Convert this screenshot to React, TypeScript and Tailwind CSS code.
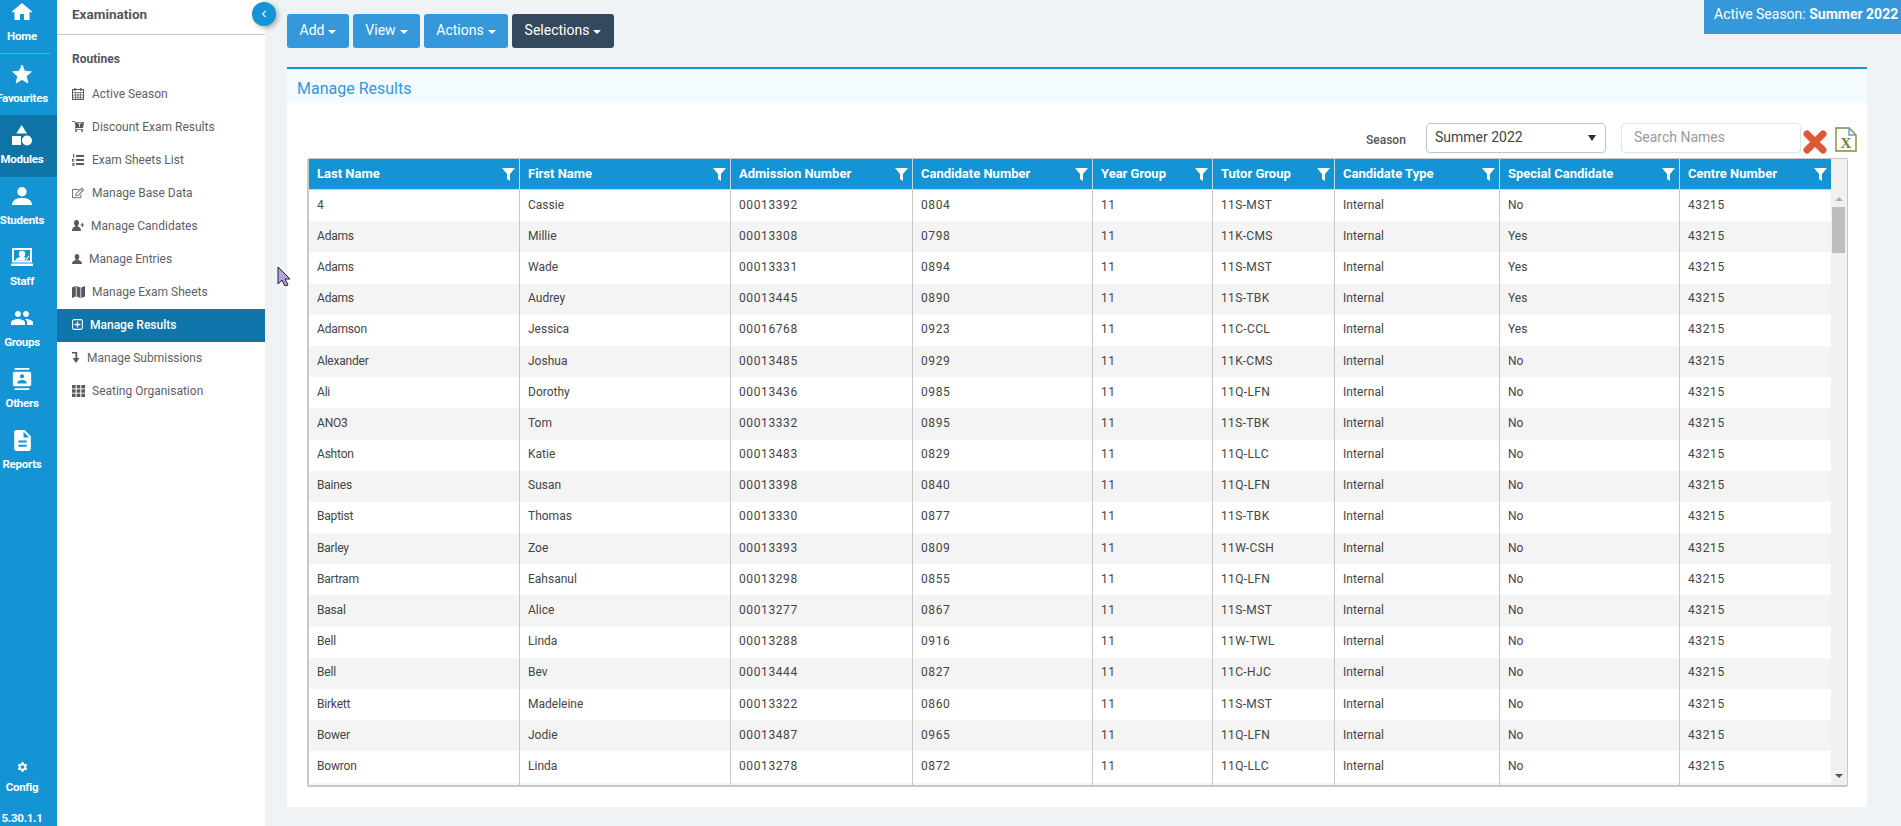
import React from "react";
import { FaRegEdit, FaChevronLeft } from "react-icons/fa";
import { MdPeople, MdContacts, MdDescription, MdSettings } from "react-icons/md";

const rows = [
  ["4","Cassie","00013392","0804","11","11S-MST","Internal","No"],
  ["Adams","Millie","00013308","0798","11","11K-CMS","Internal","Yes"],
  ["Adams","Wade","00013331","0894","11","11S-MST","Internal","Yes"],
  ["Adams","Audrey","00013445","0890","11","11S-TBK","Internal","Yes"],
  ["Adamson","Jessica","00016768","0923","11","11C-CCL","Internal","Yes"],
  ["Alexander","Joshua","00013485","0929","11","11K-CMS","Internal","No"],
  ["Ali","Dorothy","00013436","0985","11","11Q-LFN","Internal","No"],
  ["ANO3","Tom","00013332","0895","11","11S-TBK","Internal","No"],
  ["Ashton","Katie","00013483","0829","11","11Q-LLC","Internal","No"],
  ["Baines","Susan","00013398","0840","11","11Q-LFN","Internal","No"],
  ["Baptist","Thomas","00013330","0877","11","11S-TBK","Internal","No"],
  ["Barley","Zoe","00013393","0809","11","11W-CSH","Internal","No"],
  ["Bartram","Eahsanul","00013298","0855","11","11Q-LFN","Internal","No"],
  ["Basal","Alice","00013277","0867","11","11S-MST","Internal","No"],
  ["Bell","Linda","00013288","0916","11","11W-TWL","Internal","No"],
  ["Bell","Bev","00013444","0827","11","11C-HJC","Internal","No"],
  ["Birkett","Madeleine","00013322","0860","11","11S-MST","Internal","No"],
  ["Bower","Jodie","00013487","0965","11","11Q-LFN","Internal","No"],
  ["Bowron","Linda","00013278","0872","11","11Q-LLC","Internal","No"],
];
const heads = ["Last Name","First Name","Admission Number","Candidate Number","Year Group","Tutor Group","Candidate Type","Special Candidate","Centre Number"];
const gridCols = "grid grid-cols-[211px_211px_182px_180px_120px_122px_165px_180px_151px]";
const cellTrack = [
  "tracking-[-0.2px]","tracking-[0px]","tracking-[0.6px]","tracking-[0.6px]","tracking-[0.6px]",
  "tracking-[0.35px]","tracking-[0.1px]","tracking-[0px]","tracking-[0.6px]",
];

function HomeIcon() {
  return (
    <svg width="20" height="17" viewBox="0 0 20 17" fill="white">
      <path d="M10 0 L20 8.6 L20 9.2 L17.5 9.2 L17.5 17 L12 17 L12 11 L8 11 L8 17 L2.5 17 L2.5 9.2 L0 9.2 L0 8.6 Z" />
    </svg>
  );
}
function StarIcon() {
  return (
    <svg width="20" height="20" viewBox="0 0 20 20" fill="white" stroke="white" strokeWidth="0.8" strokeLinejoin="round">
      <path d="M10 1 L12.7 7.2 L19.4 7.8 L14.3 12.2 L15.9 19 L10 15.4 L4.1 19 L5.7 12.2 L0.6 7.8 L7.3 7.2 Z" />
    </svg>
  );
}
function Shapes() {
  return (
    <svg width="20" height="21" viewBox="0 0 20 21" fill="white">
      <path d="M9.7 0 L15 8.4 L4.4 8.4 Z" />
      <rect x="0" y="11" width="9" height="9" />
      <circle cx="15" cy="15.5" r="5" />
    </svg>
  );
}
function PersonIcon() {
  return (
    <svg width="20" height="18" viewBox="0 0 20 18" fill="white">
      <circle cx="10" cy="4.7" r="4.7" />
      <path d="M0 18 C0 12.8 5 11 10 11 C15 11 20 12.8 20 18 Z" />
    </svg>
  );
}
function StaffIcon() {
  return (
    <svg width="22" height="18" viewBox="0 0 22 18" fill="white">
      <path fillRule="evenodd" d="M1 0h20v14.5h-20z M3 2v10.5h16V2z" />
      <path d="M0 15.5h22V18H0z" />
      <circle cx="11" cy="6" r="3.2" />
      <path d="M4.5 12.5c.6-2.6 3.5-3.4 6.5-3.4 1.6 0 3 .2 4 .7l-1.5 2.7z" />
      <path d="M17.6 7.5l.9.7-3.2 4.3h-1.2z" />
    </svg>
  );
}
function Calendar() {
  return (
    <svg width="12" height="12" viewBox="0 0 12 12" fill="none" stroke="#58585e" strokeWidth="1">
      <rect x="0.5" y="1.5" width="11" height="10" />
      <path d="M0.5 4.5h11M0.5 7h11M0.5 9.3h11M3.5 4.5v7M6 4.5v7M8.5 4.5v7" strokeWidth="0.7" />
      <path d="M3 0v3M9 0v3" strokeWidth="1.3" />
    </svg>
  );
}
function Cart() {
  return (
    <svg width="12" height="11" viewBox="0 0 12 11" fill="#58585e">
      <path d="M0 0h2.6l.5 1.2H12L11 7H4v1h7v.8H3.2V2.6L2 .8H0z" />
      <circle cx="4" cy="10" r="1" />
      <circle cx="10" cy="10" r="1" />
      <path d="M6 2.3h3.4v.8H8v3H7.2v-3H6z" fill="#ffffff" />
    </svg>
  );
}
function ListIcon() {
  return (
    <svg width="12" height="12" viewBox="0 0 12 12" fill="#58585e">
      <path d="M4 1h8v2H4zM4 5h8v2H4zM4 9h8v2H4z" />
      <path d="M1 0h1.2v3.6H1zM0 5h2.4v.8H.9v.8h1.5v.8H0zM0 9h2.4v3H0v-.7h1.5v-.4H.5v-.7h1v-.4H0z" />
    </svg>
  );
}
function UserPlus() {
  return (
    <svg width="12" height="11" viewBox="0 0 12 11" fill="#58585e">
      <path d="M4.5 0C6.2 0 7 1.3 7 3c0 1.1-.5 2.2-1.2 2.8v.8C7.5 7.2 9 8 9 11H0C0 8 1.5 7.2 3.2 6.6v-.8C2.500 5.200 2 4.100 2 3 2 1.300 2.800 0 4.500 0z" />
      <path d="M8.500 4.500h1.500V3h1v1.500h1.500v1H11V7h-1V5.500H8.500z" />
    </svg>
  );
}
function UserSmall() {
  return (
    <svg width="10" height="10" viewBox="0 0 10 10" fill="#58585e">
      <path d="M5 0C6.500 0 7.300 1.100 7.300 2.700c0 1-.4 2-1 2.500v.7C8 6.500 10 7.200 10 10H0C0 7.200 2 6.500 3.700 5.900v-.7C3.100 4.700 2.700 3.700 2.700 2.700 2.700 1.100 3.500 0 5 0z" />
    </svg>
  );
}
function MapIcon() {
  return (
    <svg width="13" height="12" viewBox="0 0 13 12" fill="#58585e">
      <path d="M0 1.500L3.800 0v10.500L0 12zM4.600 0L8.400 1.500V12L4.600 10.500zM9.200 1.500L13 0v10.500L9.200 12z" />
    </svg>
  );
}
function PlusSquare() {
  return (
    <svg width="11" height="11" viewBox="0 0 11 11" fill="none" stroke="white" strokeWidth="1.1">
      <rect x="0.6" y="0.600" width="9.800" height="9.800" rx="1.6" />
      <path d="M5.500 2.500v6M2.500 5.500h6" strokeWidth="1.300" />
    </svg>
  );
}
function SortDown() {
  return (
    <svg width="8" height="11" viewBox="0 0 8 11" fill="#58585e">
      <path d="M0 0h5.200v6h2.300L4 11 .5 6h2.900V1.400H0z" />
    </svg>
  );
}
function GridIcon() {
  return (
    <svg width="13" height="12" viewBox="0 0 13 12" fill="#58585e">
      {[0, 4.3, 8.600].map((y) => [0, 4.700, 9.400].map((x) => <rect key={`${x}-${y}`} x={x} y={y} width="3.600" height="3.400" />))}
    </svg>
  );
}
function Funnel() {
  return (
    <svg className="absolute right-[4px] top-[9px]" width="13" height="13" viewBox="0 0 13 13" fill="white">
      <path d="M0 0H13L8 6V13L5 11V6Z" />
    </svg>
  );
}

function Label({ children }: { children: React.ReactNode }) {
  return <div className="text-[11.5px] font-bold leading-[16px] text-white whitespace-nowrap tracking-[-0.25px]">{children}</div>;
}
function RailItem({ icon, label, active }: { icon: React.ReactNode; label: string; active?: boolean }) {
  return (
    <div className={`flex flex-col items-center pt-[8px] pr-[13px] ${active ? "h-[62px] -mb-[1px] bg-[#0e74a8]" : "h-[61px]"}`}>
      <div className="h-[24px] mb-[4px] flex items-center justify-center text-white">{icon}</div>
      <Label>{label}</Label>
    </div>
  );
}
function MenuItem({ icon, label, active, w }: { icon: React.ReactNode; label: string; active?: boolean; w: string }) {
  return (
    <div className={`h-[33px] flex items-center pl-[15px] pb-[2px] text-[12px] ${active ? "bg-[#0f75aa] text-white font-medium" : "text-[#5f5f66]"}`}>
      <span className={`${w} shrink-0 flex items-center`}>{icon}</span>
      <span>{label}</span>
    </div>
  );
}
function Btn({ label, w, dark }: { label: string; w: string; dark?: boolean }) {
  return (
    <div className={`${w} h-[34px] rounded-[3px] flex items-center justify-center gap-[4px] text-white text-[14px] pb-[2px] ${dark ? "bg-[#34495e]" : "bg-[#3498db]"}`}>
      <span>{label}</span>
      <span className="w-0 h-0 border-x-[4px] border-x-transparent border-t-[4px] border-t-white mt-[3px]" />
    </div>
  );
}

export default function App() {
  return (
    <div className="w-[1901px] h-[826px] overflow-hidden flex bg-[#eff3f6] font-['Roboto',sans-serif]">
      <div className="w-[57px] h-full shrink-0 bg-[#1493d5] flex flex-col overflow-hidden">
        <div className="h-[54px] shrink-0 w-[50px] flex flex-col items-center border-b border-[#55b0e0] pt-[3px] pr-[6px]">
          <HomeIcon />
          <div className="mt-[8px]"><Label>Home</Label></div>
        </div>
        <RailItem icon={<StarIcon />} label="Favourites" />
        <RailItem icon={<Shapes />} label="Modules" active />
        <RailItem icon={<PersonIcon />} label="Students" />
        <RailItem icon={<StaffIcon />} label="Staff" />
        <RailItem icon={<MdPeople size={24} />} label="Groups" />
        <RailItem icon={<MdContacts size={22} />} label="Others" />
        <RailItem icon={<MdDescription size={25} />} label="Reports" />
        <div className="flex-1" />
        <div className="flex flex-col items-center h-[65px] pr-[13px] shrink-0">
          <MdSettings size={25} className="text-white" />
          <div className="mt-[6px]"><Label>Config</Label></div>
          <div className="mt-[15px]"><Label>5.30.1.1</Label></div>
        </div>
      </div>

      <div className="w-[208px] h-full shrink-0 bg-white relative">
        <div className="h-[35px] border-b border-[#c6c6d2] pl-[15px] pt-[6px] text-[13.5px] leading-[16px] font-bold text-[#55555c]">Examination</div>
        <div className="pl-[15px] pt-[16px] h-[43px] text-[12px] leading-[16px] font-bold text-[#55555c]">Routines</div>
        <MenuItem icon={<Calendar />} label="Active Season" w="w-[20px]" />
        <MenuItem icon={<Cart />} label="Discount Exam Results" w="w-[20px]" />
        <MenuItem icon={<ListIcon />} label="Exam Sheets List" w="w-[20px]" />
        <MenuItem icon={<FaRegEdit size={12} className="text-[#77777c]" />} label="Manage Base Data" w="w-[20px]" />
        <MenuItem icon={<UserPlus />} label="Manage Candidates" w="w-[19px]" />
        <MenuItem icon={<UserSmall />} label="Manage Entries" w="w-[17px]" />
        <MenuItem icon={<MapIcon />} label="Manage Exam Sheets" w="w-[20px]" />
        <MenuItem icon={<PlusSquare />} label="Manage Results" active w="w-[18px]" />
        <MenuItem icon={<SortDown />} label="Manage Submissions" w="w-[15px]" />
        <MenuItem icon={<GridIcon />} label="Seating Organisation" w="w-[20px]" />
        <div className="absolute left-[195px] top-[2px] w-[24px] h-[24px] rounded-full bg-[#1493d5] flex items-center justify-center shadow-[2px_2px_5px_rgba(0,0,0,0.3)] z-10">
          <FaChevronLeft size={8} className="text-white/90" />
        </div>
      </div>

      <div className="flex-1 relative pl-[22px] pr-[34px] pt-[14px]">
        <div className="flex gap-[4px]">
          <Btn label="Add" w="w-[62px]" />
          <Btn label="View" w="w-[67px]" />
          <Btn label="Actions" w="w-[84px]" />
          <Btn label="Selections" w="w-[102px]" dark />
        </div>
        <div className="absolute right-0 top-0 w-[197px] h-[34px] bg-[#3498db] text-white text-[14px] flex items-center pl-[10px] pb-[6px] whitespace-nowrap">
          Active Season:&nbsp;<b className="font-bold">Summer 2022</b>
        </div>
        <div className="mt-[19px] w-[1580px] h-[740px] bg-white border-t-[2px] border-[#1493d5]">
          <div className="h-[34px] bg-[#f3fbff] pl-[10px] pt-[7px] text-[#3498db] text-[16px] leading-[26px]">Manage Results</div>
          <div className="h-[55px] relative">
            <span className="absolute left-[1079px] top-[30px] text-[12px] leading-[14px] text-[#55555c] font-medium">Season</span>
            <div className="absolute left-[1139px] top-[20px] w-[180px] h-[30px] border border-[#c4c4c4] rounded-[4px] flex items-center justify-between pl-[8px] pr-[9px] pb-[2px] text-[14px] text-[#444]">
              <span>Summer 2022</span>
              <span className="w-0 h-0 border-x-[4px] border-x-transparent border-t-[6px] border-t-[#333] mt-[2px]" />
            </div>
            <div className="absolute left-[1334px] top-[20px] w-[180px] h-[30px] border border-[#e4e4e4] rounded-[4px] flex items-center pl-[12px] pb-[2px] text-[14px] text-[#9a9a9a]">Search Names</div>
            <svg className="absolute left-[1516px] top-[27px]" width="24" height="24" viewBox="0 0 24 24" stroke="#dc5a36" strokeWidth="7" strokeLinecap="round">
              <path d="M4 4L20 20M20 4L4 20" />
            </svg>
            <svg className="absolute left-[1548px] top-[24px]" width="22" height="25" viewBox="0 0 22 25" fill="none">
              <path d="M1 1h13l7 7v16H1z" fill="#fffef8" stroke="#7d8c3c" strokeWidth="1.400" />
              <path d="M14 1v7h7" stroke="#5f9ec4" strokeWidth="1.400" />
              <text x="11" y="21" textAnchor="middle" fontSize="15" fontFamily="Liberation Serif, serif" fill="#6b8238" fontWeight="bold">X</text>
            </svg>
          </div>
          <div className="ml-[20px] w-[1541px] h-[629px] border border-[#c8c8c8] border-l-[2px] border-b-[2px] rounded-[2px] flex overflow-hidden">
            <div className="w-[1522px] shrink-0 overflow-hidden text-[12px]">
              <div className={`${gridCols} h-[31px] bg-[#1493d5] text-white text-[13px] font-bold`}>
                {heads.map((h) => (
                  <div key={h} className="relative flex items-center pl-[8px] border-r border-b border-[#c8d8e4] last:border-r-0 whitespace-nowrap">
                    {h}
                    <Funnel />
                  </div>
                ))}
              </div>
              {rows.map((r, i) => (
                <div key={i} className={`${gridCols} h-[31.19px] ${i % 2 ? "bg-[#f4f4f4]" : "bg-white"}`}>
                  {[...r, "43215"].map((c, j) => (
                    <div key={j} className={`flex items-center pl-[8px] pb-[2px] text-[#454545] border-r border-[#c8c8c8] last:border-r-0 whitespace-nowrap ${cellTrack[j]}`}>{c}</div>
                  ))}
                </div>
              ))}
              <div className={`${gridCols} h-[31px] bg-[#f4f4f4]`}>
                {heads.map((h) => <div key={h} className="border-r border-[#c8c8c8] last:border-r-0" />)}
              </div>
            </div>
            <div className="flex-1 bg-[#f1f0ef] flex flex-col items-center">
              <span className="mt-[38px] w-0 h-0 border-x-[4px] border-x-transparent border-b-[4px] border-b-[#a9b1ae]" />
              <div className="mt-[6px] ml-[-1px] w-[13px] h-[46px] bg-[#bfbcbb]" />
              <div className="flex-1" />
              <span className="mb-[7px] w-0 h-0 border-x-[4px] border-x-transparent border-t-[4px] border-t-[#555]" />
            </div>
          </div>
        </div>
      </div>

      <svg className="absolute left-[277px] top-[266px]" width="14" height="20" viewBox="0 0 14 20">
        <path d="M1 1 L13 13 L8 13 L11 19 L8 20 L5 14 L1 18 Z" fill="#b3a3dc" stroke="#222" strokeWidth="1" />
      </svg>
    </div>
  );
}
